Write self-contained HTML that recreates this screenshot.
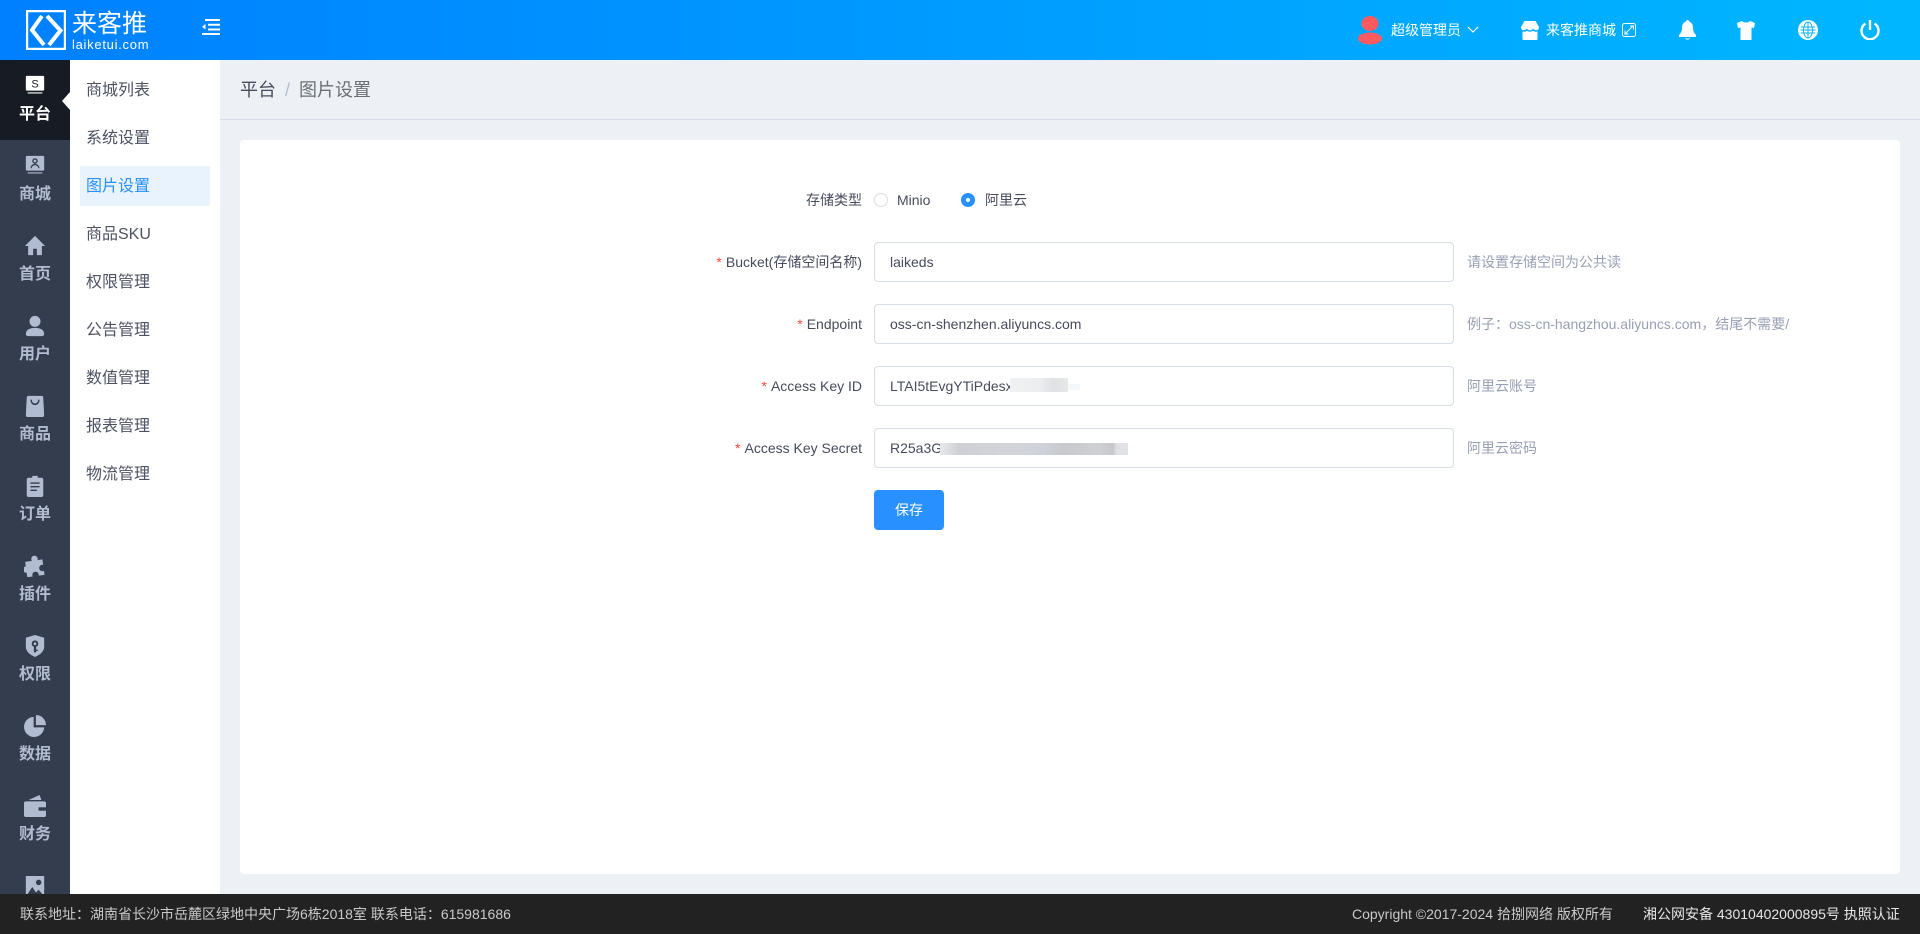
<!DOCTYPE html>
<html lang="zh-CN"><head><meta charset="utf-8"><title>图片设置</title>
<style>
*{box-sizing:border-box;margin:0;padding:0}
html,body{width:1920px;height:934px;overflow:hidden;background:#edf1f5;font-family:"Liberation Sans","Noto Sans CJK SC",sans-serif;color:#474c5e}
.abs{position:absolute;white-space:nowrap}
#hd{position:absolute;left:0;top:0;width:1920px;height:60px;background:linear-gradient(90deg,#0080ff,#00b7ff);color:#fff}
#side{position:absolute;left:0;top:60px;width:70px;height:834px;background:#343d4d;overflow:hidden}
.si{position:absolute;left:0;width:70px;height:80px;text-align:center;color:#b2bcd1;font-size:16px;font-weight:700}
.si svg{position:absolute;left:24px;top:15px;width:22px;height:22px;fill:#b2bcd1}
.si span{position:absolute;left:0;width:70px;top:43px;line-height:24px}
.si.on{background:#161b24;color:#fff}.si.on svg{fill:#fff}
#sub{position:absolute;left:70px;top:60px;width:150px;height:834px;background:#fff}
.sb{position:absolute;left:10px;width:130px;height:40px;line-height:42px;padding-left:6px;font-size:16px;color:#4d5263;border-radius:2px}
.sb.on{background:#e8f3fe;color:#2890ff}
#bc{position:absolute;left:220px;top:60px;width:1700px;height:60px;border-bottom:1px solid #d5dbe8;font-size:18px;line-height:60px;padding-left:20px;color:#474c5e}
#bc i{font-style:normal;color:#b2bcd1;margin:0 9px}#bc b{font-weight:400;color:#6a7076}
#card{position:absolute;left:240px;top:140px;width:1660px;height:734px;background:#fff;border-radius:4px}
.lb{position:absolute;width:400px;left:462px;text-align:right;font-size:14px;line-height:40px;color:#474c5e}
.lb em{font-style:normal;color:#ff453a;margin-right:4px}
.ip{position:absolute;left:874px;width:580px;height:40px;border:1px solid #d5dbe8;border-radius:4px;background:#fff;font-size:14px;line-height:38px;padding-left:15px;color:#474c5e}
.ht{position:absolute;left:1467px;font-size:14px;line-height:40px;color:#97a0b4;white-space:nowrap}
#ft{position:absolute;left:0;top:894px;width:1920px;height:40px;background:#222;font-size:14px;line-height:40px;color:#c9c9c9}
.bl{position:absolute}
</style></head><body>
<div id="hd">
<svg class="abs" style="left:26px;top:10px" width="40" height="40" viewBox="0 0 40 40" fill="none" stroke="#fff"><path d="M1.100 1.100H38.900V38.900H1.100Z" stroke-width="2.200"/><path d="M16 6L6 20l12 15" stroke-width="4"/><path d="M21 6L34.500 20.500 23 35" stroke-width="4"/></svg>
<div class="abs" style="left:72px;top:8px;font-size:25px;line-height:32px;font-weight:400">来客推</div>
<div class="abs" style="left:72px;top:37px;font-size:13px;line-height:16px;letter-spacing:.72px">laiketui.com</div>
<svg class="abs" style="left:202px;top:19px" width="18" height="16" viewBox="0 0 18 16" fill="#fff"><path d="M3 0h15v2H3zM6 4.700h12v2H6zM6 9.500h12v2H6zM0 14h18v2H0zM0 7.800L3.500 5v5.500z"/></svg>
<svg class="abs" style="left:1358px;top:16px" width="24" height="29" viewBox="0 0 24 29" fill="#ff5a5f"><ellipse cx="12" cy="7.500" rx="8.500" ry="7.500"/><ellipse cx="12" cy="22.500" rx="12" ry="6"/></svg>
<div class="abs" style="left:1391px;top:20px;font-size:14px;line-height:20px">超级管理员</div>
<svg class="abs" style="left:1467px;top:26px" width="12" height="8" viewBox="0 0 12 8" fill="none" stroke="#fff" stroke-width="1.200"><path d="M1 1l5 5 5-5"/></svg>
<svg class="abs" style="left:1521px;top:21px" width="18" height="19" viewBox="0 0 18 19" fill="#fff"><path d="M3.500 0h11L18 6c0 2-1 3.200-2.500 3.200-1.300 0-2.500-.6-3.300-1.500-.8 1-2 1.500-3.200 1.500s-2.400-.5-3.200-1.500C5 8.600 3.800 9.200 2.500 9.200 1 9.200 0 8 0 6zM1.500 10.500c2 .5 3.500 0 4.500-.8 2 1.300 4 1.300 6 0 1 .8 2.500 1.300 4.500.8V18a1 1 0 0 1-1 1h-13a1 1 0 0 1-1-1z"/></svg>
<div class="abs" style="left:1546px;top:20px;font-size:14px;line-height:20px">来客推商城</div>
<svg class="abs" style="left:1622px;top:23px" width="14" height="14" viewBox="0 0 14 14" fill="none" stroke="#fff"><rect x=".5" y=".5" width="13" height="13" rx="2"/><path d="M8 3h3.500v3.500M11.500 2.500L2.500 11.500M3 7.500V11h3.500" stroke-width=".9"/></svg>
<svg class="abs" style="left:1679px;top:20px" width="17" height="21" viewBox="0 0 17 21" fill="#fff"><path d="M8.500 0c1 0 1.500.7 1.500 1.500C13 2.500 14 5 14 8c0 3 1 5 3 7v2H0v-2c2-2 3-4 3-7 0-3 1-5.500 4-6.500C7 .7 7.500 0 8.500 0zM6 18.500h5c-.5 1.500-4.500 1.500-5 0z"/></svg>
<svg class="abs" style="left:1737px;top:21px" width="18" height="19" viewBox="0 0 18 19" fill="#fff"><path d="M5 0c1 2 7 2 8 0l5 2-1 5-2.500-.5V19h-11V6.500L1 7 0 2z"/></svg>
<svg class="abs" style="left:1798px;top:20px" width="20" height="20" viewBox="0 0 20 20"><circle cx="10" cy="10" r="10" fill="#fff"/><g fill="none" stroke="#00b0ff" stroke-width=".9"><ellipse cx="10" cy="10" rx="4.500" ry="8"/><path d="M10 2v16M3 7h14M3 13h14M2.500 10h15"/></g></svg>
<svg class="abs" style="left:1860px;top:20px" width="20" height="20" viewBox="0 0 20 20" fill="none" stroke="#fff" stroke-width="2.400"><path d="M5.500 3.500a8.500 8.500 0 1 0 9 0M10 0v10"/></svg>
</div>

<div id="side">
<div class="si on" style="top:0"><svg viewBox="0 0 24 24"><path d="M3 1h18a1 1 0 0 1 1 1v14a1 1 0 0 1-1 1H3a1 1 0 0 1-1-1V2a1 1 0 0 1 1-1zM4 19h16v1.200H4z"/><text x="12" y="13.500" font-size="12" fill="#161b24" text-anchor="middle" font-family="Liberation Sans" font-weight="400">S</text></svg><span>平台</span></div>
<div class="si" style="top:80px"><svg viewBox="0 0 24 24"><path fill-rule="evenodd" d="M3 1h18a1 1 0 0 1 1 1v14a1 1 0 0 1-1 1H3a1 1 0 0 1-1-1V2a1 1 0 0 1 1-1zM12 3.500a3 3 0 1 0 0 6 3 3 0 0 0 0-6zM12 5a1.500 1.500 0 1 1 0 3 1.500 1.500 0 0 1 0-3zM7 14.500h1.300c.3-2 1.800-3.300 3.700-3.300s3.400 1.300 3.700 3.300H17c-.4-3-2.500-5-5-5s-4.600 2-5 5zM4 19h16v1.200H4z"/></svg><span>商城</span></div>
<div class="si" style="top:160px"><svg viewBox="0 0 24 24"><path d="M12 1L1 12h3.500v10h5.500v-7h4v7h5.500V12H23z"/></svg><span>首页</span></div>
<div class="si" style="top:240px"><svg viewBox="0 0 24 24"><circle cx="12" cy="7" r="6"/><path d="M2 21c0-5 4-7 10-7s10 2 10 7c0 1-1 2-2 2H4c-1 0-2-1-2-2z"/></svg><span>用户</span></div>
<div class="si" style="top:320px"><svg viewBox="0 0 24 24"><path fill-rule="evenodd" d="M5 1h14a2 2 0 0 1 2 2l1 19a2 2 0 0 1-2 2H4a2 2 0 0 1-2-2L3 3a2 2 0 0 1 2-2zM7 5c0 8 10 8 10 0h-1.500c0 5.500-7 5.500-7 0z"/></svg><span>商品</span></div>
<div class="si" style="top:400px"><svg viewBox="0 0 24 24"><path fill-rule="evenodd" d="M9 1h6v2h4a2 2 0 0 1 2 2v17a2 2 0 0 1-2 2H5a2 2 0 0 1-2-2V5a2 2 0 0 1 2-2h4zM7 8v1.500h10V8zM7 12v1.500h10V12zM7 16v1.500h7V16z"/></svg><span>订单</span></div>
<div class="si" style="top:480px"><svg viewBox="0 0 24 24"><path d="M9 4a3.500 3.500 0 1 1 6.500 2H21v6a3.500 3.500 0 1 0 0 6.500V23h-6.500a3.500 3.500 0 1 0-6.500 0H2v-5a3.500 3.500 0 1 1 0-7V6h7.500A3 3 0 0 1 9 4z" transform="rotate(-8 12 12)"/></svg><span>插件</span></div>
<div class="si" style="top:560px"><svg viewBox="0 0 24 24"><path fill-rule="evenodd" d="M12 0l10 3v10c0 5-5 9-10 11C7 22 2 18 2 13V3zM12 6a3.500 3.500 0 0 0-1.200 6.800V19h2.400v-1.500H15v-1.500h-1.800v-3.200A3.500 3.500 0 0 0 12 6zm0 2a1.500 1.500 0 1 1 0 3 1.500 1.500 0 0 1 0-3z"/></svg><span>权限</span></div>
<div class="si" style="top:640px"><svg viewBox="0 0 24 24"><path d="M10.500 2v11.500H22A11 11 0 1 1 10.500 2z"/><path d="M13 0a11 11 0 0 1 11 11H13z"/></svg><span>数据</span></div>
<div class="si" style="top:720px"><svg viewBox="0 0 24 24"><path fill-rule="evenodd" d="M2 7h20a2 2 0 0 1 2 2v13a2 2 0 0 1-2 2H2a2 2 0 0 1-2-2V9a2 2 0 0 1 2-2zM16 13.500v3.500h8v-3.500zM5 5.500L17 0l2 5.500z"/><rect x="16" y="13.500" width="8" height="3.500" rx="1" fill="#343d4d"/></svg><span>财务</span></div>
<div class="si" style="top:800px"><svg viewBox="0 0 24 24" style="top:16px"><path fill-rule="evenodd" d="M2 0h20v24H2zM16 4a3 3 0 1 0 0 6 3 3 0 0 0 0-6zM3 21h18l-5-6-3 3-4-6z"/></svg></div>
</div>
<svg class="abs" style="left:62px;top:92px" width="8" height="18"><path d="M8 0v18L0 9z" fill="#fff"/></svg>

<div id="sub">
<div class="sb" style="top:10px">商城列表</div>
<div class="sb" style="top:58px">系统设置</div>
<div class="sb on" style="top:106px">图片设置</div>
<div class="sb" style="top:154px">商品SKU</div>
<div class="sb" style="top:202px">权限管理</div>
<div class="sb" style="top:250px">公告管理</div>
<div class="sb" style="top:298px">数值管理</div>
<div class="sb" style="top:346px">报表管理</div>
<div class="sb" style="top:394px">物流管理</div>
</div>

<div id="bc">平台<i>/</i><b>图片设置</b></div>
<div id="card"></div>

<div class="lb" style="top:180px">存储类型</div>
<div class="abs" style="left:874px;top:193px;width:14px;height:14px;border:1px solid #d5dbe8;border-radius:50%;background:#fff"></div>
<div class="abs" style="left:897px;top:190px;font-size:14px;line-height:20px">Minio</div>
<div class="abs" style="left:961px;top:193px;width:14px;height:14px;border-radius:50%;background:#2890ff"></div>
<div class="abs" style="left:966px;top:198px;width:4px;height:4px;border-radius:50%;background:#fff"></div>
<div class="abs" style="left:985px;top:190px;font-size:14px;line-height:20px">阿里云</div>

<div class="lb" style="top:242px"><em>*</em>Bucket(存储空间名称)</div>
<div class="ip" style="top:242px">laikeds</div>
<div class="ht" style="top:242px">请设置存储空间为公共读</div>
<div class="lb" style="top:304px"><em>*</em>Endpoint</div>
<div class="ip" style="top:304px">oss-cn-shenzhen.aliyuncs.com</div>
<div class="ht" style="top:304px">例子：oss-cn-hangzhou.aliyuncs.com，结尾不需要/</div>
<div class="lb" style="top:366px"><em>*</em>Access Key ID</div>
<div class="ip" style="top:366px">LTAI5tEvgYTiPdesx</div>
<div class="ht" style="top:366px">阿里云账号</div>
<div class="lb" style="top:428px"><em>*</em>Access Key Secret</div>
<div class="ip" style="top:428px">R25a3G</div>
<div class="ht" style="top:428px">阿里云密码</div>

<div class="bl" style="left:1010px;top:378px;width:58px;height:14px;background:linear-gradient(90deg,#f0f1f3,#eceef0 50%,#dfe1e4 75%,#e6e8ea)"></div>
<div class="bl" style="left:1068px;top:384px;width:12px;height:6px;background:#f5f8fa"></div>
<div class="bl" style="left:940px;top:443px;width:188px;height:12px;background:linear-gradient(90deg,#e8e9ec,#cfd0d5 10%,#d2d4da 40%,#cfd2da 55%,#c8c9ce 65%,#cfd0d4 85%,#c6c6cb 92%,#dfe1e5 94%,#e0e2e6)"></div>

<div class="abs" style="left:874px;top:490px;width:70px;height:40px;background:#2890ff;border-radius:4px;color:#fff;font-size:14px;line-height:40px;text-align:center">保存</div>

<div id="ft">
<div class="abs" style="left:20px;top:0">联系地址：湖南省长沙市岳麓区绿地中央广场6栋2018室 联系电话：615981686</div>
<div class="abs" style="left:1352px;top:0">Copyright ©2017-2024 拾捌网络 版权所有</div>
<div class="abs" style="left:1643px;top:0;color:#e6e6e6">湘公网安备 43010402000895号 执照认证</div>
</div>
</body></html>
